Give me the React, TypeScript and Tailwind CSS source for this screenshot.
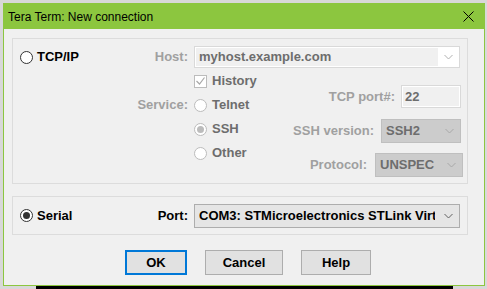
import React from "react";

function Chevron({ color = "#a0a0a0" }: { color?: string }) {
  return (
    <svg width="9" height="6" viewBox="0 0 9 6">
      <polyline points="0.5,1 4.5,5 8.5,1" fill="none" stroke={color} strokeWidth="1" />
    </svg>
  );
}

function Radio({ checked, disabled }: { checked?: boolean; disabled?: boolean }) {
  const border = disabled ? "border-[#bcbcbc]" : "border-[#333333]";
  const dot = disabled ? "bg-[#bcbcbc]" : "bg-[#333333]";
  return (
    <span className={`w-[13px] h-[13px] rounded-full border bg-white flex items-center justify-center shrink-0 ${border}`}>
      {checked && <span className={`w-[7px] h-[7px] rounded-full ${dot}`}></span>}
    </span>
  );
}

function Check() {
  return (
    <span className="w-[13px] h-[13px] border border-[#bcbcbc] bg-white flex items-center justify-center shrink-0">
      <svg width="9" height="8" viewBox="0 0 9 8">
        <polyline points="0.5,4 3.5,7 8.5,0.5" fill="none" stroke="#a8a8a8" strokeWidth="1.2" />
      </svg>
    </span>
  );
}

function Label({ children }: { children: React.ReactNode }) {
  return <span className="text-[#a0a0a0]">{children}</span>;
}

function DisabledCombo({ text, w }: { text: string; w: string }) {
  return (
    <div className={`${w} h-[24px] bg-[#cccccc] border border-[#bfbfbf] flex items-center justify-between pl-[4px] pr-[6px] text-[#6d6d6d]`}>
      <span>{text}</span>
      <Chevron color="#a8a8a8" />
    </div>
  );
}

export default function App() {
  return (
    <div
      className="w-[487px] h-[289px] bg-[#d8d8d8] overflow-hidden flex flex-col"
      style={{ fontFamily: '"Liberation Sans", Arial, sans-serif' }}
    >
      <div className="ml-[3px] mt-[3px] w-[482px] h-[283px] border border-[#8cc63f] bg-[#f0f0f0] flex flex-col shrink-0">
        {/* title bar */}
        <div className="h-[25px] bg-[#8cc63f] flex items-center justify-between pl-[4px] pr-[10px] shrink-0">
          <span className="text-[12px] text-black">Tera Term: New connection</span>
          <svg width="11" height="11" viewBox="0 0 11 11">
            <path d="M0.5 0.5 L10.5 10.5 M10.5 0.5 L0.5 10.5" stroke="#000" strokeWidth="1" />
          </svg>
        </div>

        <div className="flex flex-col text-[13px] font-bold text-black">
          {/* TCP/IP group */}
          <div className="ml-[8px] mt-[9px] w-[456px] h-[146px] border border-[#dcdcdc] flex flex-col">
            <div className="mt-[7px] flex items-center h-[22px]">
              <div className="w-[175px] flex items-center justify-between pl-[7px]">
                <div className="flex items-center gap-[4px]">
                  <Radio />
                  <span>TCP/IP</span>
                </div>
                <Label>Host:</Label>
              </div>
              <div className="ml-[6px] w-[266px] h-[22px] border border-[#d9d9d9] bg-white flex items-center p-[1px]">
                <div className="flex-1 h-full bg-[#f0f0f0] flex items-center pl-[3px] text-[#6d6d6d]">myhost.example.com</div>
                <div className="w-[20px] flex justify-center">
                  <Chevron color="#b0b0b0" />
                </div>
              </div>
            </div>

            <div className="flex">
              <div className="w-[270px] flex flex-col mt-[1px]">
                <div className="h-[24px] flex items-center">
                  <div className="w-[175px]"></div>
                  <div className="ml-[6px] flex items-center gap-[5px] text-[#6d6d6d]">
                    <Check />
                    <span>History</span>
                  </div>
                </div>
                <div className="h-[24px] flex items-center">
                  <div className="w-[175px] text-right">
                    <Label>Service:</Label>
                  </div>
                  <div className="ml-[6px] flex items-center gap-[5px] text-[#6d6d6d]">
                    <Radio disabled />
                    <span>Telnet</span>
                  </div>
                </div>
                <div className="h-[24px] flex items-center">
                  <div className="w-[175px]"></div>
                  <div className="ml-[6px] flex items-center gap-[5px] text-[#6d6d6d]">
                    <Radio disabled checked />
                    <span>SSH</span>
                  </div>
                </div>
                <div className="h-[24px] flex items-center">
                  <div className="w-[175px]"></div>
                  <div className="ml-[6px] flex items-center gap-[5px] text-[#6d6d6d]">
                    <Radio disabled />
                    <span>Other</span>
                  </div>
                </div>
              </div>

              <div className="flex-1 flex flex-col items-end pt-[17px]">
                <div className="flex items-center mr-[6px] h-[23px]">
                  <Label>TCP port#:</Label>
                  <div className="ml-[6px] w-[60px] h-[23px] border border-[#d9d9d9] bg-white p-[1px]">
                    <div className="w-full h-full bg-[#f0f0f0] flex items-center pl-[2px] text-[#6d6d6d]">22</div>
                  </div>
                </div>
                <div className="flex items-center mr-[6px] mt-[11px]">
                  <Label>SSH version:</Label>
                  <div className="ml-[7px]">
                    <DisabledCombo text="SSH2" w="w-[80px]" />
                  </div>
                </div>
                <div className="flex items-center mr-[4px] mt-[10px]">
                  <Label>Protocol:</Label>
                  <div className="ml-[8px]">
                    <DisabledCombo text="UNSPEC" w="w-[88px]" />
                  </div>
                </div>
              </div>
            </div>
          </div>

          {/* Serial group */}
          <div className="ml-[8px] mt-[12px] w-[456px] h-[39px] border border-[#dcdcdc] flex items-center">
            <div className="w-[175px] flex items-center justify-between pl-[7px]">
              <div className="flex items-center gap-[4px]">
                <Radio checked />
                <span>Serial</span>
              </div>
              <span>Port:</span>
            </div>
            <div className="ml-[6px] w-[266px] h-[24px] bg-[#e5e5e5] border border-[#adadad] flex items-center justify-between pl-[4px] pr-[6px]">
              <span className="whitespace-nowrap overflow-hidden w-[236px]">COM3: STMicroelectronics STLink Virtual COM Port</span>
              <Chevron color="#606060" />
            </div>
          </div>

          {/* buttons */}
          <div className="mt-[15px] ml-[121px] flex gap-[18px]">
            <button className="w-[62px] h-[25px] bg-[#e1e1e1] border-2 border-[#0078d7] flex items-center justify-center">OK</button>
            <button className="w-[78px] h-[25px] bg-[#e1e1e1] border border-[#adadad] flex items-center justify-center">Cancel</button>
            <button className="w-[70px] h-[25px] bg-[#e1e1e1] border border-[#adadad] flex items-center justify-center">Help</button>
          </div>
        </div>
      </div>
      <div className="ml-[36px] w-[417px] h-[4px] bg-black shrink-0"></div>
    </div>
  );
}
